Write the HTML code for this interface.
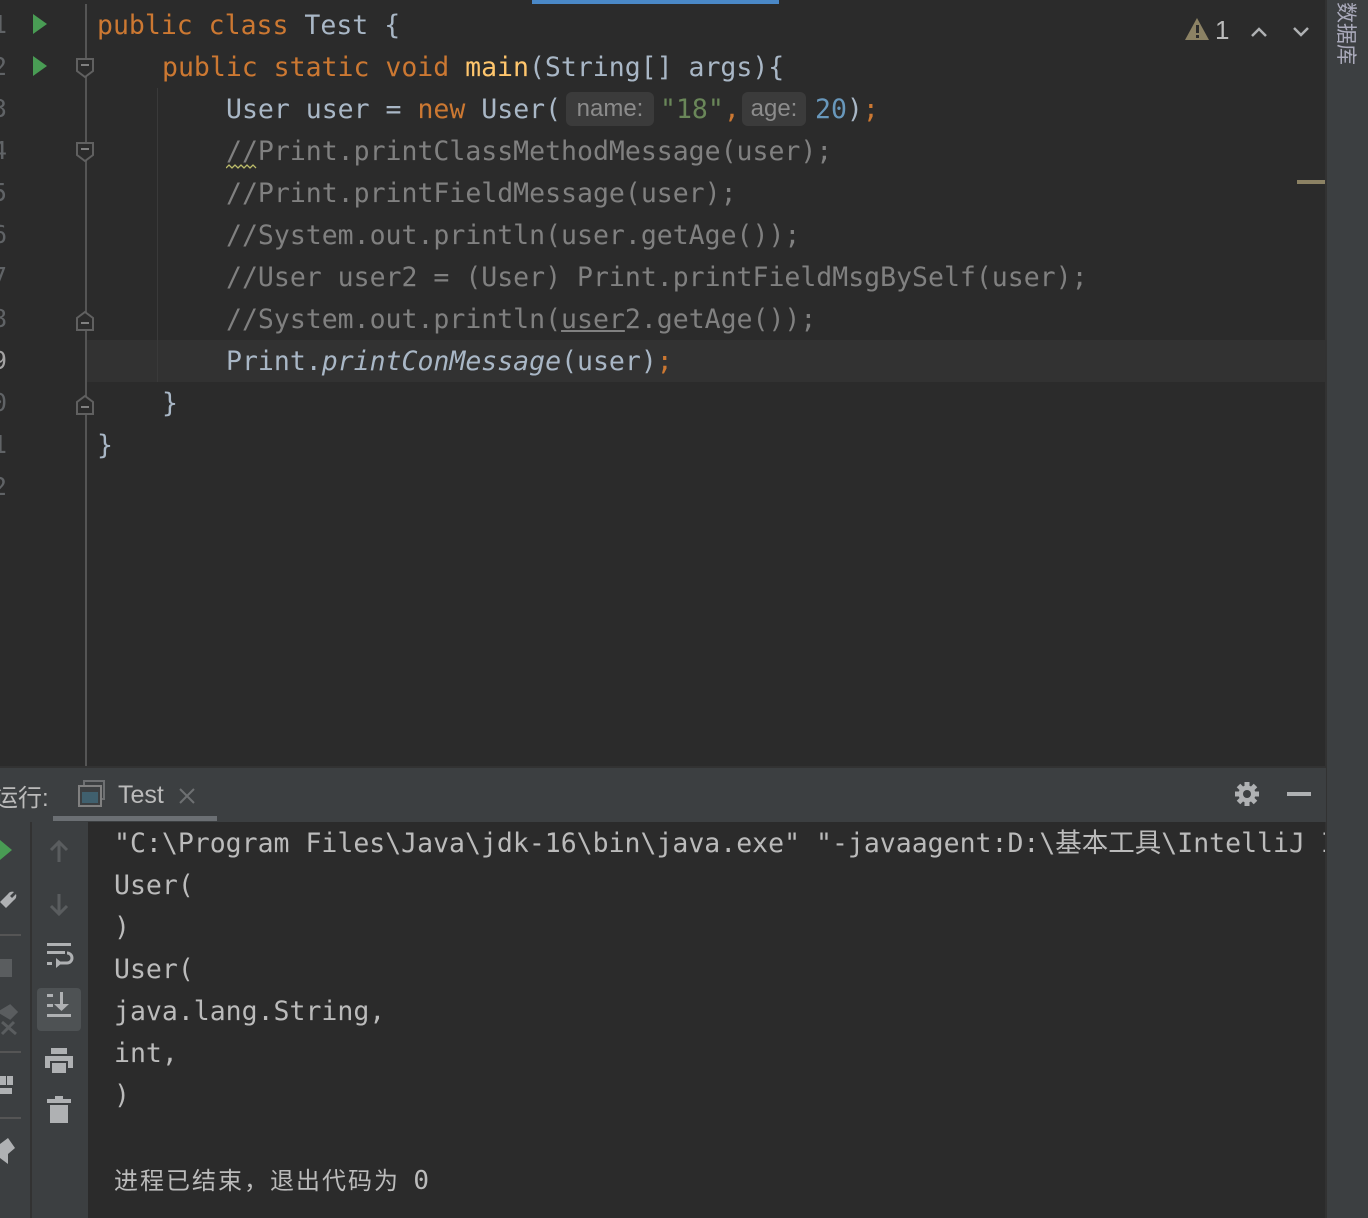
<!DOCTYPE html>
<html><head><meta charset="utf-8"><style>
*{margin:0;padding:0;box-sizing:border-box}
body{width:1368px;height:1218px;background:#2b2b2b;position:relative;overflow:hidden;font-family:"DejaVu Sans Mono","Liberation Mono","Noto Sans CJK SC",monospace;font-size:26.5px;color:#a9b7c6}
.a{position:absolute;white-space:pre;line-height:42px;top:0}
.k{color:#cc7832}.c{color:#808080}.s{color:#6a8759}.n{color:#6897bb}.f{color:#ffc66d}.i{font-style:italic}
.ln{position:absolute;left:-8px;color:#606366;line-height:42px;font-size:25px}
.hint{position:absolute;height:34px;background:#3b3b3b;border-radius:6px;color:#8c8c8c;font-family:"Liberation Sans",sans-serif;font-size:24px;line-height:34px;text-align:center}
.con{position:absolute;left:114px;white-space:pre;line-height:42px;color:#bbbbbb;font-family:"DejaVu Sans Mono","Noto Sans CJK SC",monospace}
</style></head><body>
<div style="position:absolute;left:532px;top:0;width:247px;height:4px;background:#4a88c7"></div>
<div style="position:absolute;left:86px;top:340px;width:1240px;height:42px;background:#323232"></div>
<div style="position:absolute;left:85px;top:4px;width:2px;height:762px;background:#555555"></div>
<div style="position:absolute;left:157px;top:88px;width:1px;height:294px;background:#3a3a3a"></div>
<div class="ln" style="top:4px">1</div><div class="ln" style="top:46px">2</div><div class="ln" style="top:88px">3</div><div class="ln" style="top:130px">4</div><div class="ln" style="top:172px">5</div><div class="ln" style="top:214px">6</div><div class="ln" style="top:256px">7</div><div class="ln" style="top:298px">8</div><div class="ln" style="top:340px;color:#a4a3a3">9</div><div class="ln" style="top:382px">0</div><div class="ln" style="top:424px">1</div><div class="ln" style="top:466px">2</div>
<svg style="position:absolute;left:0;top:0" width="100" height="420">
<polygon points="33,14 33,34 47,24" fill="#499c54"/><polygon points="33,56 33,76 47,66" fill="#499c54"/>
<g fill="#2b2b2b" stroke="#606060" stroke-width="2"><path d="M77,59h16v12l-8,6l-8,-6z"/><path d="M77,143h16v12l-8,6l-8,-6z"/><path d="M77,330h16v-12l-8,-6l-8,6z"/><path d="M77,414h16v-12l-8,-6l-8,6z"/></g>
<g stroke="#808080" stroke-width="2"><line x1="81" y1="65" x2="89" y2="65"/><line x1="81" y1="149" x2="89" y2="149"/><line x1="81" y1="323" x2="89" y2="323"/><line x1="81" y1="407" x2="89" y2="407"/></g>
</svg>
<div style="position:absolute;left:0;top:1px;width:1326px;height:760px">
<div class="a" style="left:97px;top:4px"><span class="k">public class </span>Test {</div>
<div class="a" style="left:162px;top:46px"><span class="k">public static void </span><span class="f">main</span>(String[] args){</div>
<div class="a" style="left:226px;top:88px">User user = <span class="k">new </span>User(</div>
<div class="a" style="left:660px;top:88px"><span class="s">"18"</span><span class="k">,</span></div>
<div class="a" style="left:815px;top:88px"><span class="n">20</span>)<span class="k">;</span></div>
<div class="a c" style="left:226px;top:130px">//Print.printClassMethodMessage(user);</div>
<div class="a c" style="left:226px;top:172px">//Print.printFieldMessage(user);</div>
<div class="a c" style="left:226px;top:214px">//System.out.println(user.getAge());</div>
<div class="a c" style="left:226px;top:256px">//User user2 = (User) Print.printFieldMsgBySelf(user);</div>
<div class="a c" style="left:226px;top:298px">//System.out.println(<span style="text-decoration:underline">user</span>2.getAge());</div>
<div class="a" style="left:226px;top:340px">Print.<span class="i">printConMessage</span>(user)<span class="k">;</span></div>
<div class="a" style="left:162px;top:382px">}</div>
<div class="a" style="left:97px;top:424px">}</div>
</div>
<div class="hint" style="left:566px;top:92px;width:88px">name:</div>
<div class="hint" style="left:742px;top:92px;width:64px">age:</div>
<svg style="position:absolute;left:226px;top:163px" width="34" height="8"><path d="M0,5 l3,-3 l3,3 l3,-3 l3,3 l3,-3 l3,3 l3,-3 l3,3 l3,-3 l3,3" fill="none" stroke="#bcbc6a" stroke-width="1.3"/></svg>
<svg style="position:absolute;left:1184px;top:16px" width="130" height="30">
<polygon points="13,2 25,24 1,24" fill="#8c8264"/><rect x="12" y="9" width="3" height="8" fill="#2b2b2b"/><rect x="12" y="19" width="3" height="3" fill="#2b2b2b"/>
<path d="M68,20 l7,-7 l7,7" fill="none" stroke="#afb1b3" stroke-width="2.5"/><path d="M110,12 l7,7 l7,-7" fill="none" stroke="#afb1b3" stroke-width="2.5"/>
</svg>
<div style="position:absolute;left:1215px;top:15px;font-family:'Liberation Sans',sans-serif;font-size:26px;color:#bbb">1</div>
<div style="position:absolute;left:1297px;top:180px;width:28px;height:4px;background:#8c8264"></div>
<div style="position:absolute;left:1325px;top:0;width:2px;height:1218px;background:#323232"></div>
<div style="position:absolute;left:1327px;top:0;width:41px;height:1218px;background:#3c3f41"></div>
<div style="position:absolute;left:1333px;top:2px;width:26px;font-family:'Noto Sans CJK SC',sans-serif;font-size:21px;line-height:24px;color:#aab;writing-mode:vertical-rl;text-orientation:sideways">数据库</div>
<div style="position:absolute;left:0;top:766px;width:1326px;height:2px;background:#323232"></div>
<div style="position:absolute;left:0;top:768px;width:1326px;height:54px;background:#3c3f41"></div>
<div style="position:absolute;left:-6px;top:778px;font-family:'Liberation Sans','Noto Sans CJK SC',sans-serif;font-size:24px;color:#bbb">运行:</div>
<svg style="position:absolute;left:78px;top:780px" width="30" height="28"><rect x="6" y="1" width="20" height="18" fill="none" stroke="#6e7072" stroke-width="2"/><rect x="1" y="6" width="22" height="20" fill="#3c3f41" stroke="#808080" stroke-width="2"/><rect x="4" y="12" width="16" height="11" fill="#40606e"/></svg>
<div style="position:absolute;left:118px;top:781px;font-family:'Liberation Sans',sans-serif;font-size:25px;color:#bbb">Test</div>
<svg style="position:absolute;left:178px;top:787px" width="18" height="18"><path d="M2,2L16,16M16,2L2,16" stroke="#6e7072" stroke-width="2"/></svg>
<div style="position:absolute;left:53px;top:816px;width:164px;height:5px;background:#6b6f73"></div>
<svg style="position:absolute;left:1230px;top:778px" width="90" height="32">
<g transform="translate(17,16)"><g stroke="#afb1b3" stroke-width="5"><line x1="0" y1="-12" x2="0" y2="12"/><line x1="-12" y1="0" x2="12" y2="0"/><line x1="-8.5" y1="-8.5" x2="8.5" y2="8.5"/><line x1="8.5" y1="-8.5" x2="-8.5" y2="8.5"/></g><circle r="8.5" fill="#afb1b3"/><circle r="4" fill="#3c3f41"/></g>
<rect x="57" y="14" width="24" height="4" fill="#afb1b3"/>
</svg>
<div style="position:absolute;left:0;top:822px;width:30px;height:396px;background:#3c3f41"></div>
<div style="position:absolute;left:30px;top:822px;width:2px;height:396px;background:#323232"></div>
<div style="position:absolute;left:32px;top:822px;width:56px;height:396px;background:#3c3f41"></div>
<svg style="position:absolute;left:0;top:822px" width="88" height="396">
<polygon points="0,18 0,38 12,28" fill="#499c54"/>
<path d="M0,80 l8,-8 a5,5 0 0 1 6,-2 l-4,4 2,2 4,-4 a5,5 0 0 1 -2,6 l-8,8z" fill="#afb1b3"/>
<line x1="0" y1="113" x2="21" y2="113" stroke="#555" stroke-width="2"/>
<rect x="0" y="137" width="12" height="18" fill="#5a5d5f"/>
<path d="M0,190 l10,-6 l6,6 l-6,6 z M2,200 l14,12 M14,200 l-12,12" stroke="#5a5d5f" stroke-width="3" fill="#5a5d5f"/>
<line x1="0" y1="230" x2="21" y2="230" stroke="#555" stroke-width="2"/>
<rect x="0" y="254" width="6" height="9" fill="#afb1b3"/><rect x="0" y="266" width="12" height="6" fill="#afb1b3"/><rect x="7" y="254" width="6" height="9" fill="#afb1b3"/>
<line x1="0" y1="296" x2="21" y2="296" stroke="#555" stroke-width="2"/>
<path d="M0,322 l8,-6 l7,10 l-7,6 l0,10 l-8,-6z" fill="#afb1b3"/>
<g stroke="#5a5d5f" stroke-width="3" fill="none"><path d="M59,20v20M51,28l8,-8 8,8"/><path d="M59,72v20M51,84l8,8 8,-8"/></g>
<g fill="#afb1b3"><rect x="47" y="121" width="24" height="3"/><rect x="47" y="129" width="18" height="3"/><rect x="47" y="140" width="5" height="3"/></g>
<path d="M57,141h10a4,4 0 0 0 0,-10" fill="none" stroke="#afb1b3" stroke-width="3"/><polygon points="56,136 62,141 56,146" fill="#afb1b3"/>
<rect x="37" y="166" width="44" height="43" rx="4" fill="#4e5254"/>
<g fill="#afb1b3"><rect x="47" y="172" width="6" height="3"/><rect x="47" y="182" width="6" height="3"/><rect x="47" y="192" width="24" height="3"/><rect x="60" y="170" width="3" height="14"/><polygon points="54,182 69,182 61.5,189"/></g>
<g fill="#afb1b3"><rect x="51" y="226" width="16" height="6"/><rect x="45" y="234" width="28" height="12"/><rect x="51" y="240" width="16" height="12" stroke="#3c3f41" stroke-width="2"/></g>
<g fill="#afb1b3"><rect x="47" y="277" width="24" height="4"/><rect x="55" y="274" width="8" height="3"/><rect x="50" y="283" width="18" height="18"/></g>
</svg>
<div style="position:absolute;left:0;top:0;width:1325px;height:1218px;overflow:hidden">
<div class="con" style="top:823px">"C:\Program Files\Java\jdk-16\bin\java.exe" "-javaagent:D:\基本工具\IntelliJ I</div>
<div class="con" style="top:865px">User(</div>
<div class="con" style="top:907px">)</div>
<div class="con" style="top:949px">User(</div>
<div class="con" style="top:991px">java.lang.String,</div>
<div class="con" style="top:1033px">int,</div>
<div class="con" style="top:1075px">)</div>
<div class="con" style="top:1158px;font-family:'Noto Sans CJK SC','DejaVu Sans Mono',monospace;font-size:24px;letter-spacing:2px">进程已结束，退出代码为 <span style="font-family:'DejaVu Sans Mono',monospace;font-size:26px;margin-left:6px">0</span></div>
</div>
</body></html>
